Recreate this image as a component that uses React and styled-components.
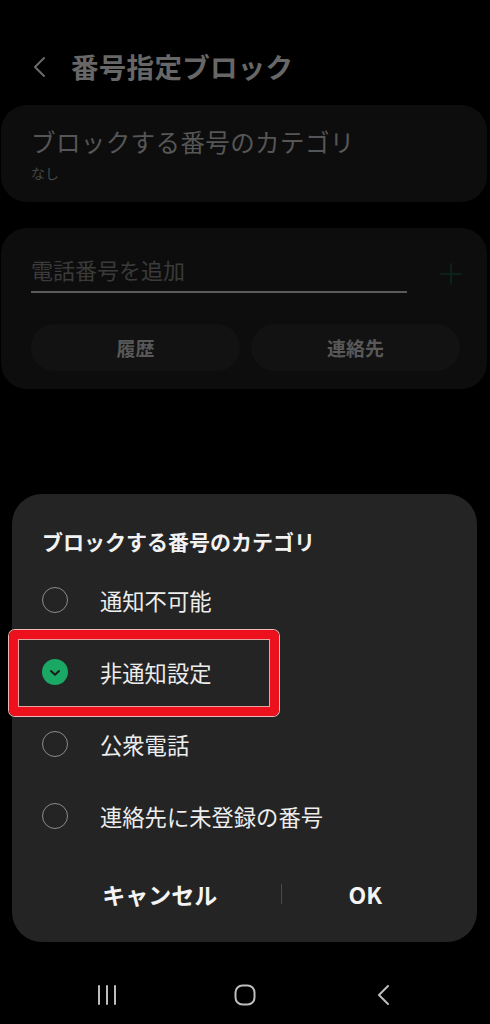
import React, { useState } from 'react';
import styled, { createGlobalStyle } from 'styled-components';

const GlobalStyle = createGlobalStyle`
  html, body {
    margin: 0;
    padding: 0;
    background: #000;
  }
  * {
    box-sizing: border-box;
  }
  body {
    font-family: "Noto Sans CJK JP", "Noto Sans", Roboto, sans-serif;
  }
`;

const Screen = styled.div`
  width: 490px;
  height: 1024px;
  background: #000;
  display: flex;
  flex-direction: column;
  overflow: hidden;
`;

const Header = styled.div`
  height: 54px;
  margin-top: 40px;
  display: flex;
  align-items: center;
  padding-left: 31px;
  gap: 22px;
`;

const BackIcon = styled.svg`
  width: 18px;
  height: 22px;
  display: block;
`;

const Title = styled.h1`
  margin: 0;
  font-size: 27.5px;
  font-weight: 700;
  color: #676767;
  line-height: 1;
  letter-spacing: 0.3px;
`;

const Card = styled.div`
  margin: ${p => p.$top}px 3px 0 1px;
  background: #0d0d0d;
  border-radius: 26px;
  padding: ${p => p.$pad};
`;

const CardTitle = styled.div`
  font-size: 24.5px;
  line-height: 30px;
  color: #565656;
  letter-spacing: 0.4px;
`;

const CardSub = styled.div`
  margin-top: 6px;
  font-size: 14px;
  line-height: 20px;
  color: #474747;
`;

const InputRow = styled.div`
  display: flex;
  align-items: flex-end;
  gap: 33px;
  padding-right: 25px;
`;

const Field = styled.div`
  flex: 1;
  font-size: 22px;
  line-height: 30px;
  color: #3a3a3a;
  padding-bottom: 7px;
  border-bottom: 2px solid #5a5a5a;
`;

const PlusIcon = styled.svg`
  width: 22px;
  height: 22px;
  margin-bottom: 8px;
  display: block;
`;

const PillRow = styled.div`
  display: flex;
  gap: 11px;
  margin-top: 31px;
  padding-right: 27px;
`;

const Pill = styled.div`
  flex: 1;
  height: 47px;
  border-radius: 24px;
  background: #121212;
  display: flex;
  align-items: center;
  justify-content: center;
  font-size: 19px;
  font-weight: 700;
  color: #585858;
`;

const Dialog = styled.div`
  margin: auto 13px 0 12px;
  background: #242424;
  border-radius: 30px;
  padding: 32px 0 24px;
`;

const DialogTitle = styled.div`
  padding-left: 30px;
  font-size: 21px;
  line-height: 30px;
  font-weight: 700;
  color: #f2f2f2;
`;

const OptionList = styled.div`
  margin-top: 8px;
  display: flex;
  flex-direction: column;
`;

const Option = styled.div`
  position: relative;
  height: 72px;
  display: flex;
  align-items: center;
  padding-left: 30px;
  gap: 32px;
  cursor: pointer;
`;

const Radio = styled.div`
  width: 26px;
  height: 26px;
  border-radius: 50%;
  flex-shrink: 0;
  border: ${p => (p.$checked ? 'none' : '1.5px solid #8c8c8c')};
  background: ${p => (p.$checked ? '#1aa865' : 'transparent')};
  display: flex;
  align-items: center;
  justify-content: center;
`;

const OptionLabel = styled.span`
  font-size: 22.3px;
  line-height: 30px;
  color: #ededed;
`;

const Highlight = styled.div`
  position: absolute;
  left: -3px;
  top: -6px;
  width: 270px;
  height: 86px;
  border: 9px solid #ec111c;
  border-radius: 6px;
  box-shadow: inset 0 0 0 1px #e7a3a3, 0 0 0 1px #f0b8b8;
  pointer-events: none;
`;

const Actions = styled.div`
  margin-top: 18px;
  height: 48px;
  display: flex;
  align-items: center;
  padding: 0 29px 0 26px;
`;

const ActionButton = styled.button`
  flex: ${p => p.$grow};
  background: none;
  border: none;
  padding: 0;
  font-family: inherit;
  font-size: 23px;
  font-weight: 700;
  color: #f4f4f4;
  height: 48px;
  cursor: pointer;
`;

const Divider = styled.div`
  width: 1px;
  height: 20px;
  background: #4a4a4a;
`;

const NavBar = styled.div`
  height: 82px;
  display: grid;
  grid-template-columns: 1fr 1fr 1fr;
  align-items: center;
  padding: 24px 38px 0 38px;
`;

const NavItem = styled.div`
  display: flex;
  justify-content: center;
`;

const options = ['通知不可能', '非通知設定', '公衆電話', '連絡先に未登録の番号'];

export default function App() {
  const [selected, setSelected] = useState(1);

  return (
    <Screen>
      <GlobalStyle />
      <Header>
        <BackIcon viewBox="0 0 18 22">
          <path d="M13 2 L4 11 L13 20" fill="none" stroke="#6a6a6a" strokeWidth="2" strokeLinecap="round" strokeLinejoin="round" />
        </BackIcon>
        <Title>番号指定ブロック</Title>
      </Header>

      <Card $top={11} $pad="22px 30px 19px">
        <CardTitle>ブロックする番号のカテゴリ</CardTitle>
        <CardSub>なし</CardSub>
      </Card>

      <Card $top={26} $pad="26px 0 18px 30px">
        <InputRow>
          <Field>電話番号を追加</Field>
          <PlusIcon viewBox="0 0 22 22">
            <path d="M11 1 V21 M1 11 H21" stroke="#0c2117" strokeWidth="2" strokeLinecap="round" />
          </PlusIcon>
        </InputRow>
        <PillRow>
          <Pill>履歴</Pill>
          <Pill>連絡先</Pill>
        </PillRow>
      </Card>

      <Dialog>
        <DialogTitle>ブロックする番号のカテゴリ</DialogTitle>
        <OptionList>
          {options.map((label, i) => (
            <Option key={label} onClick={() => setSelected(i)}>
              <Radio $checked={selected === i}>
                {selected === i && (
                  <svg width="16" height="16" viewBox="0 0 16 16">
                    <path d="M4 7 L8 10.8 L12 7" fill="none" stroke="#1c1c1c" strokeWidth="2" strokeLinecap="round" strokeLinejoin="round" />
                  </svg>
                )}
              </Radio>
              <OptionLabel>{label}</OptionLabel>
              {i === 1 && <Highlight />}
            </Option>
          ))}
        </OptionList>
        <Actions>
          <ActionButton $grow={244}>キャンセル</ActionButton>
          <Divider />
          <ActionButton $grow={166}>OK</ActionButton>
        </Actions>
      </Dialog>

      <NavBar>
        <NavItem>
          <svg width="20" height="20" viewBox="0 0 20 20">
            <path d="M2 1 V19 M10 1 V19 M18 1 V19" stroke="#bdbdbd" strokeWidth="2" strokeLinecap="round" />
          </svg>
        </NavItem>
        <NavItem>
          <svg width="22" height="22" viewBox="0 0 22 22">
            <rect x="1.5" y="1.5" width="19" height="19" rx="7" fill="none" stroke="#bdbdbd" strokeWidth="2" />
          </svg>
        </NavItem>
        <NavItem>
          <svg width="13" height="22" viewBox="0 0 13 22">
            <path d="M11 2 L2 11 L11 20" fill="none" stroke="#bdbdbd" strokeWidth="2" strokeLinecap="round" strokeLinejoin="round" />
          </svg>
        </NavItem>
      </NavBar>
    </Screen>
  );
}
